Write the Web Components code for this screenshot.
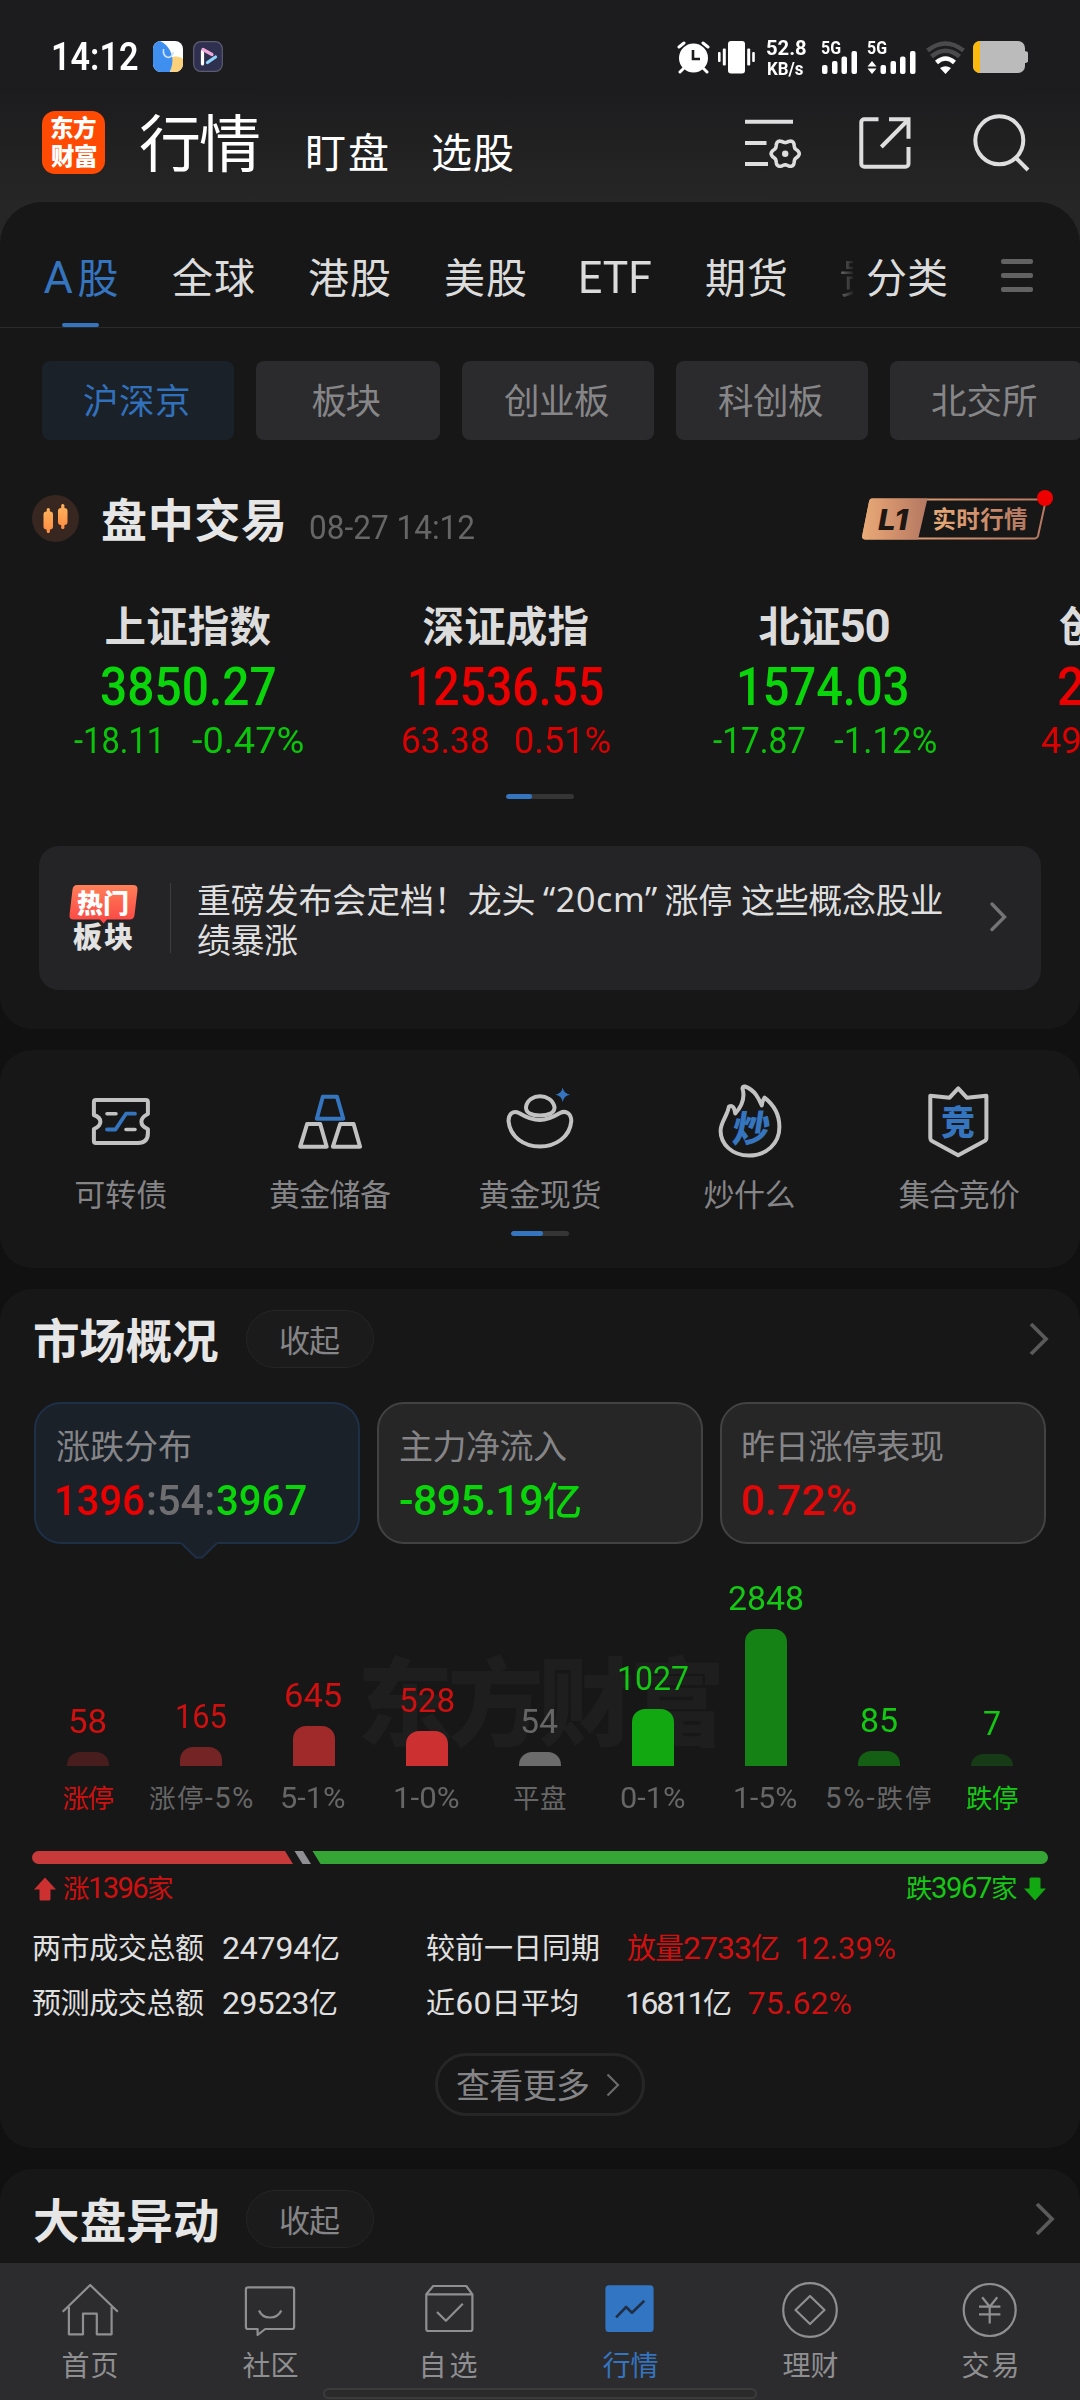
<!DOCTYPE html>
<html lang="zh-CN">
<head>
<meta charset="utf-8">
<title>行情</title>
<style>
    body {
        margin: 0;
        width: 1080px;
        height: 2400px;
        overflow: hidden;
        background: #111;
        font-family: "Noto Sans CJK SC", sans-serif;
    }
</style>
</head>
<body>
<market-app></market-app>

<script>
const CJK = '"Noto Sans CJK SC", sans-serif';
const LATIN = 'Roboto, "Noto Sans CJK SC", sans-serif';
const pen = document.createElement('canvas').getContext('2d');

// Base for all the parts: puts render() into an open shadow root.
class Part extends HTMLElement {
    constructor() {
        super();
        this.attachShadow({ mode: 'open' });
    }

    connectedCallback() {
        this.shadowRoot.innerHTML = this.render();
    }

    attr(name, fallback = '') {
        return this.getAttribute(name) ?? fallback;
    }
}

// One line of text, tracked (or condensed, if all latin) so that its ink is `w` wide.
class FitText extends Part {

    isLatin(s) {
        return /^[\x20-\x7e]+$/.test(s);
    }

    font(ch, size, weight) {
        const own = this.attr('font');
        if (own) return `${weight} ${size}px "${own}", ${CJK}`;
        return this.isLatin(ch) ? `${weight} ${size * 1.1}px ${LATIN}` : `${weight} ${size}px ${CJK}`;
    }

    render() {
        const text = this.textContent;
        const size = +this.attr('size', 30);
        const weight = this.attr('weight', '400');
        const own = this.attr('font');
        const runs = text.match(/[\x20-\x7e]+|[^\x20-\x7e]+/g) || [];
        const body = own ? text : runs.map(r => this.isLatin(r) ? `<i>${r}</i>` : r).join('');
        return `
            <style>
                :host {
                    display: block;
                    flex: none;
                    height: ${size}px;
                    font: ${weight} ${size}px/${size}px ${own ? `"${own}",` : ''} ${CJK};
                    white-space: pre;
                }
                span { display: inline-block; transform-origin: 0 50%; }
                i { font: ${weight} 1.1em/0 ${LATIN}; }
            </style>
            <span>${body}</span>
        `.replace(/\n\s*/g, ' ').replace('</style> ', '</style>').trim();
    }

    connectedCallback() {
        super.connectedCallback();
        const w = +this.attr('w');
        if (!w) return;
        const text = this.textContent;
        const size = +this.attr('size', 30);
        const weight = this.attr('weight', '400');
        const span = this.shadowRoot.querySelector('span');
        const first = text[0], last = text[text.length - 1];
        pen.font = this.font(first, size, weight);
        const left = -pen.measureText(first).actualBoundingBoxLeft;
        pen.font = this.font(last, size, weight);
        const m = pen.measureText(last);
        const right = m.width - m.actualBoundingBoxRight;
        const ink = span.getBoundingClientRect().width - left - right;
        this.style.width = w + 'px';
        if (this.isLatin(text)) {
            const k = w / ink;
            span.style.transform = `scaleX(${k})`;
            span.style.marginLeft = -left * k + 'px';
        } else {
            span.style.letterSpacing = (text.length > 1 ? (w - ink) / (text.length - 1) : 0) + 'px';
            span.style.marginLeft = -left + 'px';
        }
    }
}
customElements.define('fit-text', FitText);

class StatusBar extends Part {
    render() {
        return `
            <style>
                :host { display: flex; height: 92px; padding-left: 54px; color: #fff; align-items: flex-start; }
                .app { margin-top: 41px; }
                .a1 { margin-left: 15px; }
                .a2 { margin-left: 10px; }
                svg { display: block; flex: none; }
                .rate { margin: 38px 0 0 12px; display: flex; flex-direction: column; gap: 0; width: 42px; }
                .net { margin-top: 39px; height: 34px; display: flex; flex-direction: column; }
            </style>
            <fit-text size="35" w="84" weight="600" style="margin-top:37px">14:12</fit-text>
            <svg class="app a1" width="30" height="31" viewBox="0 0 30 31">
                <clipPath id="r"><rect width="30" height="31" rx="8"/></clipPath>
                <g clip-path="url(#r)">
                    <rect width="30" height="31" fill="#fff"/>
                    <path d="M18 17c5-3 9-1 12 1v13H18z" fill="#fbd17c"/>
                    <path d="M0 0h7c9 4 14 14 12 24l-2 7H0z" fill="#3f8ff0"/>
                    <path d="M10.500 8c-1 10 8 11 10 3" fill="none" stroke="#cfe3fb" stroke-width="1.600"/>
                </g>
            </svg>
            <svg class="app a2" width="30" height="31" viewBox="0 0 30 31" fill="none" stroke-width="3.200" stroke-linecap="round">
                <rect x=".7" y=".7" width="28.600" height="29.600" rx="7" fill="#2f2f50" stroke="#5d5d72" stroke-width="1.200"/>
                <path d="M9.500 10v13" stroke="#fff"/>
                <path d="M10 8.500l9 5" stroke="#f0a8d8"/>
                <path d="M14.500 21.500l8-5.500" stroke="#8fd4f8"/>
            </svg>
            <svg width="33" height="33" viewBox="0 0 33 33" style="margin:41px 0 0 454px">
                <g stroke="#fff" stroke-width="3" stroke-linecap="round" fill="none">
                    <path d="M2 6l5-4M31 6l-5-4M7 27l-4 4M26 27l4 4"/>
                </g>
                <circle cx="16.500" cy="17" r="14.500" fill="#fff"/>
                <path d="M16 9v9h7" fill="none" stroke="#1c1c1e" stroke-width="2.600"/>
            </svg>
            <svg width="37" height="33" viewBox="0 0 37 33" fill="#fff" style="margin:41px 0 0 8px">
                <rect x="10" width="17" height="32.500" rx="3"/>
                <rect x="0" y="11" width="2.600" height="10" rx="1"/><rect x="4.800" y="7.500" width="3" height="17" rx="1"/>
                <rect x="29.200" y="7.500" width="3" height="17" rx="1"/><rect x="34.200" y="11" width="2.600" height="10" rx="1"/>
            </svg>
            <div class="rate">
                <fit-text size="18.500" w="39" weight="700">52.8</fit-text>
                <fit-text size="17" w="35" weight="700" style="margin:2px 0 0 1px">KB/s</fit-text>
            </div>
            <div class="net" style="margin-left:12px">
                <fit-text size="16" w="20" weight="700">5G</fit-text>
                <svg width="37" height="23" viewBox="0 0 37 23" fill="#fff" style="margin-top:-4px">
                    <rect x="1" y="14" width="5.500" height="9" rx="2"/><rect x="11" y="10" width="5.500" height="13" rx="2"/>
                    <rect x="20.500" y="5.500" width="5.500" height="17.500" rx="2"/><rect x="30.500" y="0" width="5.500" height="23" rx="2"/>
                </svg>
            </div>
            <div class="net" style="margin-left:9px">
                <fit-text size="16" w="20" weight="700">5G</fit-text>
                <svg width="50" height="23" viewBox="0 0 50 23" fill="#fff" style="margin-top:-4px">
                    <path d="M5 10l4.500 5.500H.5zM5 23l4.500-5.500H.5z"/>
                    <rect x="13.500" y="14" width="5.500" height="9" rx="2"/><rect x="23.500" y="10" width="5.500" height="13" rx="2"/>
                    <rect x="33" y="5.500" width="5.500" height="17.500" rx="2"/><rect x="43" y="0" width="5.500" height="23" rx="2"/>
                </svg>
            </div>
            <svg width="39" height="33" viewBox="0 0 39 33" fill="none" stroke-width="4.500" style="margin:41px 0 0 9px">
                <path d="M1.500 9.500Q19.500-4.500 37.500 9.500" stroke="#4a4a4c"/>
                <path d="M5.500 15.500Q19.500 4 33.500 15.500" stroke="#4a4a4c"/>
                <path d="M10.500 21.500Q19.500 13.500 28.500 21.500" stroke="#fff"/>
                <path d="M14 27q5.500-3.500 11 0l-5.500 6z" fill="#fff"/>
            </svg>
            <svg width="55" height="33" viewBox="0 0 55 33" style="margin:41px 0 0 8px">
                <clipPath id="b"><rect width="52" height="32" rx="7"/></clipPath>
                <g clip-path="url(#b)"><rect width="52" height="32" fill="#bbb"/><rect width="7" height="32" fill="#fbb80f"/></g>
                <path d="M51 10q4 0 4 2v8q0 2-4 2z" fill="#bbb"/>
            </svg>
        `;
    }
}
customElements.define('status-bar', StatusBar);

class AppHeader extends Part {

    gear(cx, cy) {
        let d = '';
        for (let a = 0; a < 360; a += 5) {
            const t = a * Math.PI / 180;
            const r = 12.6 + 1.5 * Math.cos(6 * t);
            d += (a ? 'L' : 'M') + (cx + r * Math.cos(t)).toFixed(1) + ' ' + (cy + r * Math.sin(t)).toFixed(1);
        }
        return d + 'z';
    }

    render() {
        return `
            <style>
                :host { display: flex; height: 110px; padding-left: 42px; align-items: flex-start; color: #fff; }
                .logo {
                    width: 63px; height: 63px; margin-top: 19px; border-radius: 13px; background: #ff4a04;
                    display: flex; flex-direction: column; align-items: center; padding-top: 5px;
                    box-sizing: border-box; gap: 4px;
                }
                svg { fill: none; stroke: #dedede; stroke-width: 4; flex: none; }
            </style>
            <div class="logo">
                <fit-text size="23.500" w="45" weight="900">东方</fit-text>
                <fit-text size="23.500" w="45" weight="900">财富</fit-text>
            </div>
            <fit-text size="62" w="119" style="margin:17px 0 0 35px">行情</fit-text>
            <fit-text size="41" w="80" style="margin:38px 0 0 49px">盯盘</fit-text>
            <fit-text size="41" w="81" style="margin:38px 0 0 44px">选股</fit-text>
            <svg width="56" height="52" viewBox="0 0 56 52" style="margin:26px 0 0 232px">
                <path d="M0 3.700h48M0 25h21.500M0 46h23"/>
                <path d="${this.gear(40.2, 35.7)}" stroke-width="3.600" stroke-linejoin="round"/>
                <circle cx="40.200" cy="35.700" r="3.200" fill="#dedede" stroke="none"/>
            </svg>
            <svg width="54" height="54" viewBox="0 0 54 54" style="margin:24px 0 0 58px">
                <path d="M19.500 3.300H5.300a3 3 0 0 0-3 3v41.400a3 3 0 0 0 3 3h41.200a3 3 0 0 0 3-3V31M30 3.300h19.500v19.400M49 4L22.300 31"/>
            </svg>
            <svg width="58" height="58" viewBox="0 0 58 58" style="margin:22px 0 0 60px">
                <circle cx="26.300" cy="26.300" r="24"/>
                <path d="M43 44l12 12"/>
            </svg>
        `;
    }
}
customElements.define('app-header', AppHeader);

class MarketTabs extends Part {
    render() {
        return `
            <style>
                :host {
                    display: flex; gap: 55px; height: 126px; box-sizing: border-box;
                    padding: 53px 0 0 43px; border-bottom: 1px solid #2a2a2b; color: #dcdcdc;
                }
                .on { color: #3574be; display: flex; flex-direction: column; align-items: center; width: 75px; }
                .on b { width: 37px; height: 5px; border-radius: 3px; background: #3574be; margin-top: 27px; }
                .more { width: 12px; overflow: hidden; -webkit-mask: linear-gradient(90deg, #0006, #0001); color: #dcdcdc; }
                .rows { display: flex; flex-direction: column; gap: 9.500px; margin: 4px 0 0 -1px; }
                .rows i { width: 32px; height: 4.500px; border-radius: 2px; background: #626262; }
            </style>
            <div class="on"><fit-text size="41" w="74">A 股</fit-text><b></b></div>
            <fit-text size="41" w="81">全球</fit-text>
            <fit-text size="41" w="81">港股</fit-text>
            <fit-text size="41" w="81">美股</fit-text>
            <fit-text size="41" w="70">ETF</fit-text>
            <fit-text size="41" w="80">期货</fit-text>
            <div class="more"><fit-text size="41" w="39">贵</fit-text></div>
            <fit-text size="41" w="80" style="margin-left:-41px">分类</fit-text>
            <div class="rows"><i></i><i></i><i></i></div>
        `;
    }
}
customElements.define('market-tabs', MarketTabs);

class FilterChip extends Part {
    render() {
        return `
            <style>
                :host {
                    display: flex; flex: none; width: ${this.attr('width', '192')}px; height: 79px; border-radius: 8px;
                    background: #2b2b2d; color: #868688; justify-content: center; padding: 20px 3px 0 0; box-sizing: border-box;
                }
                :host([active]) { background: #1a2129; color: #3170bb; }
            </style>
            <fit-text size="35.500" w="${this.attr('w', '105')}">${this.textContent}</fit-text>
        `;
    }
}
customElements.define('filter-chip', FilterChip);

class SessionHead extends Part {
    render() {
        return `
            <style>
                :host { display: flex; height: 106px; padding-left: 32px; align-items: flex-start; }
                svg { flex: none; }
            </style>
            <svg width="47" height="47" viewBox="0 0 47 47" style="margin-top:15px">
                <defs><linearGradient id="c" x2="0" y2="1"><stop stop-color="#ffb15c"/><stop offset="1" stop-color="#ff8f45"/></linearGradient></defs>
                <circle cx="23.500" cy="23.500" r="23.500" fill="#382720"/>
                <g fill="url(#c)">
                    <rect x="11.500" y="16.500" width="9.500" height="18" rx="3"/><rect x="14.700" y="13" width="3.200" height="25" rx="1.500"/>
                    <rect x="26" y="13" width="9.500" height="17" rx="3"/><rect x="29.200" y="9" width="3.200" height="25" rx="1.500"/>
                </g>
            </svg>
            <fit-text size="46" w="182" weight="700" style="margin:14px 0 0 23px;color:#e6e6e6">盘中交易</fit-text>
            <fit-text size="31" w="164" style="margin:30px 0 0 26px;color:#666">08-27 14:12</fit-text>
            <svg width="196" height="56" viewBox="0 0 196 56" style="margin:8px 0 0 385px">
                <defs><linearGradient id="g" x1="0" x2="1"><stop stop-color="#e8ab77"/><stop offset=".35" stop-color="#d9976f"/><stop offset="1" stop-color="#b47862"/></linearGradient></defs>
                <path d="M13 11.500H187L179 48Q178 50.500 175.500 50.500H7Q3.500 50.500 4.300 47L11 14Q11.500 11.500 13 11.500z" fill="none" stroke="url(#g)" stroke-width="2"/>
                <path d="M13 10.500H68.500L59 51.500H6Q2.500 51.500 3.300 47.500L10 13.500Q10.700 10.500 13 10.500z" fill="url(#g)"/>
                <text x="19" y="42" font-family="Inter" font-weight="800" font-style="italic" font-size="28" textLength="30" lengthAdjust="spacingAndGlyphs" fill="#1c1712">L1</text>
                <text x="73.500" y="40" font-family="Noto Sans CJK SC" font-weight="700" font-size="23.500" textLength="95" fill="url(#g)">实时行情</text>
                <circle cx="186" cy="10" r="8" fill="#ee0000"/>
            </svg>
        `;
    }
}
customElements.define('session-head', SessionHead);

class IndexQuote extends Part {
    render() {
        const [name, value, diff, pct] = this.textContent.split('|');
        const [wn, wv, wd, wp] = this.attr('w').split(' ');
        return `
            <style>
                :host { display: flex; flex: none; width: 318px; flex-direction: column; align-items: center; color: #0ad40a; }
                :host([up]) { color: #ea0000; }
                :host([cut]) { align-items: flex-start; padding-left: 76px; }
                div { display: flex; margin-top: 14px; gap: ${this.attr('gap', '33')}px; opacity: .92; }
                :host([cut]) div { margin-left: -18px; }
            </style>
            <fit-text size="41.500" w="${wn}" weight="700" style="color:#dcdcdc">${name}</fit-text>
            <fit-text size="48" w="${wv}" weight="500" style="margin-top:14px">${value}</fit-text>
            <div><fit-text size="34" w="${wd}">${diff}</fit-text>${pct ? `<fit-text size="34" w="${wp}">${pct}</fit-text>` : ''}</div>
        `;
    }
}
customElements.define('index-quote', IndexQuote);

class PagerBar extends Part {
    render() {
        return `
            <style>
                :host { display: block; width: ${this.attr('width')}px; height: 5px; border-radius: 3px; background: #353536; overflow: hidden; }
                i { display: block; width: ${this.attr('fill')}px; height: 5px; border-radius: 3px; background: #3574be; }
            </style>
            <i></i>
        `;
    }
}
customElements.define('pager-bar', PagerBar);

class HotBanner extends Part {
    render() {
        return `
            <style>
                :host {
                    display: flex; width: 1002px; height: 144px; box-sizing: border-box; border-radius: 20px;
                    background: #242426; padding-left: 30px; color: #dfdfdf; align-items: flex-start;
                }
                hr { width: 1px; height: 70px; margin: 37px 0 0 31px; border: 0; background: #3c3c3e; }
                .text { margin: 36px 0 0 27px; width: 745px; }
                .line { display: flex; height: 40px; gap: 8.500px; }
                svg { flex: none; }
            </style>
            <svg width="70" height="74" viewBox="0 0 70 74" style="margin-top:37px">
                <defs><linearGradient id="h" x2="0" y2="1"><stop stop-color="#ff8058"/><stop offset="1" stop-color="#fb4444"/></linearGradient></defs>
                <path d="M8 2H64Q69 2 68.500 7L65.500 32Q65 36.500 60.500 36.500H38L34.500 40.500 31 36.500H4.500Q0 36.500.5 32L3.500 6.500Q4 2 8 2z" fill="url(#h)"/>
                <text x="8" y="30" font-family="Noto Sans CJK SC" font-weight="900" font-size="26" textLength="52" fill="#fff">热门</text>
                <text x="4" y="65" font-family="Noto Sans CJK SC" font-weight="900" font-size="29" textLength="60" fill="#e2e2e2">板块</text>
            </svg>
            <hr>
            <div class="text">
                <div class="line">
                    <fit-text size="34" w="336.500">重磅发布会定档！龙头</fit-text>
                    <fit-text size="34" w="114" font="Noto Sans">“20cm”</fit-text>
                    <fit-text size="34" w="277">涨停 这些概念股业</fit-text>
                </div>
                <div class="line"><fit-text size="34" w="99">绩暴涨</fit-text></div>
            </div>
            <svg width="18" height="32" viewBox="0 0 18 32" fill="none" stroke="#747476" stroke-width="3.400" stroke-linecap="round" style="margin:55px 0 0 46px">
                <path d="M3 3L15.500 16 3 28.500"/>
            </svg>
        `;
    }
}
customElements.define('hot-banner', HotBanner);

const ENTRY_ICONS = {
    bond: `<path d="M12.900 16H62.900Q64.900 16 64.900 18V30Q58.400 33 58.400 37.700T64.900 45V49Q64.900 59 55 59H12.900Q10.900 59 10.900 57V45Q17.400 42 17.400 37.700T10.900 31V18Q10.900 16 12.900 16z"/>
        <path d="M24 29.700H33M43 45.500H52" stroke-width="3.600"/>
        <path class="b" d="M24 45.500H32.500L43 29.700H52" stroke-width="3.800"/>`,
    gold: `<path class="b" d="M30.800 12.700H45L51.300 34.700H24.800z"/>
        <path d="M15.100 40H28.200L34.700 62.700H8.200zM48.200 40H61.600L68.100 62.700H40.900z"/>`,
    ingot: `<path d="M37.800 36C28 36 22 32 17 29C11 26 6.500 30 6.500 37C8 53 22 62.500 37.800 62.500S68 53 69.300 37C69.300 29.500 64 26 58 29C53 32 47 36 37.800 36z"/>
        <path d="M24 23C25 15.500 32 12.300 38 12.300S51 15.500 52.500 23C53 29 46 31.500 38 31.500S23.500 29 24 23z"/>
        <path d="M60.700 3.500Q61.700 9.700 68 10.700Q61.700 11.700 60.700 18Q59.700 11.700 53.400 10.700Q59.700 9.700 60.700 3.500z" fill="#3574be" stroke="none"/>`,
    fire: `<path d="M33 2.500C43 6 47 15 49.800 21.500Q50 17 52.500 13.700C62 21 67.400 31 67.400 43C67.400 60 54 71.500 37 71.500C20 71.500 8.600 60 8.600 47C8.600 38 15 33 17 22.500Q22 20 23.300 29.500C30 22 33 13 30.500 4.500Q30.500 2 33 2.500z"/>
        <text x="19" y="58" transform="translate(9 0) skewX(-9)" textLength="37" font-size="37">炒</text>`,
    shield: `<path d="M37.200 4.300L45.800 13.700 65.400 11.700V54Q65.400 56 63.500 57L37.200 71.300 11 57Q9.300 56 9.300 54V11.700L28.600 13.700z"/>
        <text x="20" y="51" font-size="34" textLength="34">竞</text>`
};

class QuickEntry extends Part {
    render() {
        return `
            <style>
                :host { display: flex; flex: 1; flex-direction: column; align-items: center; color: #858588; }
                svg { fill: none; stroke: #c2c2c2; stroke-width: 4; stroke-linejoin: round; stroke-linecap: round; }
                .b { stroke: #3574be; }
                text { fill: #3574be; stroke: none; font-family: "Noto Sans CJK SC"; font-weight: 900; }
            </style>
            <svg width="76" height="76" viewBox="0 0 76 76">${ENTRY_ICONS[this.attr('icon')]}</svg>
            <fit-text size="31" w="${this.attr('w')}" style="margin-top:17px">${this.textContent}</fit-text>
        `;
    }
}
customElements.define('quick-entry', QuickEntry);

class SectionTitle extends Part {
    render() {
        return `
            <style>
                :host { display: flex; align-items: flex-start; padding: 21px ${this.attr('end')}px 0 34px; height: 92px; box-sizing: content-box; }
                .pill {
                    width: 128px; height: 58px; box-sizing: border-box; margin-left: 28px; border: 1px solid #262627;
                    border-radius: 29px; background: #1b1b1b; display: flex; justify-content: center; padding-top: 12px; color: #858588;
                }
                svg { margin: 12px 0 0 auto; }
            </style>
            <fit-text size="46.500" w="184" weight="700" style="margin-top:5px;color:#e6e6e6">${this.textContent}</fit-text>
            <div class="pill"><fit-text size="31" w="60">收起</fit-text></div>
            <svg width="20" height="34" viewBox="0 0 20 34" fill="none" stroke="#5a5a5b" stroke-width="3.800"><path d="M2 2L17 17 2 32"/></svg>
        `;
    }
}
customElements.define('section-title', SectionTitle);

class StatCard extends Part {
    render() {
        return `
            <style>
                :host {
                    display: block; flex: 1; height: 142px; box-sizing: border-box; position: relative;
                    border: 2px solid #424243; border-radius: 27px; background: #262626; padding: 24px 0 0 21px; color: #858588;
                }
                :host([active]) { background: #1a2129; border-color: #1e3047; }
                .value { display: flex; margin-top: 17px; gap: 4px; }
                /* pointer under the active card */
                svg { display: none; position: absolute; left: 144px; top: 138px; }
                :host([active]) svg { display: block; }
            </style>
            <fit-text size="34" w="${this.attr('w')}">${this.attr('label')}</fit-text>
            <div class="value"><slot></slot></div>
            <svg width="38" height="18" viewBox="0 0 38 18"><path d="M0 0H38L37 1 22 15.500Q19 17.500 16 15.500L1 1z" fill="#1a2129"/><path d="M1 1L16 15.500H22L37 1" fill="none" stroke="#1e3047" stroke-width="1.800"/></svg>
        `;
    }
}
customElements.define('stat-card', StatCard);

class DistBar extends Part {
    render() {
        return `
            <style>
                :host { display: flex; flex: none; width: 113px; flex-direction: column; align-items: center; justify-content: flex-end; color: #cf1010; }
                :host([down]) { color: #14c814; }
                :host([flat]) { color: #666; }
                i { width: 42px; height: ${this.attr('h')}px; border-radius: 13px 13px 0 0; background: ${this.attr('fill')}; margin: 17px 0 18px; }
                :host(:not([edge])) .label { color: #666; }
            </style>
            <fit-text size="31" w="${this.attr('wv')}">${this.attr('value')}</fit-text>
            <i></i>
            <fit-text class="label" size="26.500" w="${this.attr('w')}">${this.textContent}</fit-text>
        `;
    }
}
customElements.define('dist-bar', DistBar);

class RatioBar extends Part {
    render() {
        return `
            <style>
                :host { display: block; padding: 0 32px; }
                svg { display: block; }
                .legend { display: flex; justify-content: space-between; margin-top: 10px; height: 30px; }
                .legend div { display: flex; gap: 7px; }
                .legend svg { margin-top: 3px; }
            </style>
            <svg width="1016" height="13" viewBox="0 0 1016 13">
                <path d="M6.500 0H253L261 13H6.500A6.500 6.500 0 0 1 6.500 0z" fill="#c83939"/>
                <path d="M262.500 0H271L279 13H270.500z" fill="#909094"/>
                <path d="M280.500 0H1009.500A6.500 6.500 0 0 1 1009.500 13H288.500z" fill="#35a635"/>
            </svg>
            <div class="legend">
                <div style="margin-left:2px;color:#cf1010">
                    <svg width="22" height="24" viewBox="0 0 22 24" fill="#cc3030"><path d="M11 .5L22 12.500H16.500V22Q16.500 23.500 15 23.500H7Q5.500 23.500 5.500 22V12.500H0z"/></svg>
                    <fit-text size="26.500" w="110">涨1396家</fit-text>
                </div>
                <div style="margin-right:2px;color:#14c814">
                    <fit-text size="26.500" w="111">跌3967家</fit-text>
                    <svg width="22" height="24" viewBox="0 0 22 24" fill="#12a812"><path d="M11 23.500L22 11.500H16.500V2Q16.500 .5 15 .5H7Q5.500 .5 5.500 2V11.500H0z"/></svg>
                </div>
            </div>
        `;
    }
}
customElements.define('ratio-bar', RatioBar);

class TurnoverRow extends Part {
    render() {
        return `
            <style>
                :host { display: grid; grid-template-columns: 190px 204px 200px auto; padding-left: 33px; height: 55px; color: #e0e0e0; }
            </style>
            <slot></slot>
        `;
    }
}
customElements.define('turnover-row', TurnoverRow);

class MorePill extends Part {
    render() {
        return `
            <style>
                :host {
                    display: flex; width: 210px; height: 63px; box-sizing: border-box; border: 3px solid #262627; border-radius: 32px;
                    padding: 11px 0 0 19px; color: #858588;
                }
                svg { margin: 6px 0 0 17px; }
            </style>
            <fit-text size="34" w="132">查看更多</fit-text>
            <svg width="14" height="24" viewBox="0 0 14 24" fill="none" stroke="#6a6a6b" stroke-width="2.200"><path d="M1.500 1.500L12 12 1.500 22.500"/></svg>
        `;
    }
}
customElements.define('more-pill', MorePill);

const TAB_ICONS = {
    home: `<path d="M2.700 31.700L30.200 5 57.800 31.700M8.900 27V54.300H23V33.700H36.800V54.300H51.600V27"/>`,
    chat: `<path d="M8 7.300H52Q54.100 7.300 54.100 9.500V47Q54.100 49 52 49H25.200L17.600 55V49H8Q5.900 49 5.900 47V9.500Q5.900 7.300 8 7.300z"/><path d="M19 30.500Q22 37.500 30 37.500T41.300 30.500"/>`,
    pick: `<path d="M6.300 14.300L13.200 6H46.300L52.400 14.300V49Q52.400 51 50.400 51H8.300Q6.300 51 6.300 49zH52.400"/><path d="M17 32L25.900 40.700 42.800 23.700"/>`,
    quote: `<rect x="5.400" y="5.300" width="48.200" height="46.700" rx="3.500" fill="#3275c3" stroke="none"/><path d="M16.100 37.300L26.100 27 32 32.700 44.300 20.700" stroke="#1f2f45" stroke-width="2.600"/>`,
    wealth: `<circle cx="30" cy="30" r="26.800"/><path d="M30 16L44.500 30 30 44 15.500 30z"/>`,
    trade: `<circle cx="29.700" cy="30" r="26"/><path d="M22.200 17.300L29.700 26.700 37.300 17.300M19 26.700H40.400M19 34.300H40.400M29.700 26.700V43.500"/>`
};

class TabItem extends Part {
    render() {
        return `
            <style>
                :host { display: flex; flex: 1; flex-direction: column; align-items: center; padding-top: 17px; color: #8f8f91; }
                :host([active]) { color: #3574be; }
                svg { fill: none; stroke: #8f8f91; stroke-width: 2.200; stroke-linejoin: round; }
            </style>
            <svg width="60" height="60" viewBox="0 0 60 60">${TAB_ICONS[this.attr('icon')]}</svg>
            <fit-text size="28" w="55" style="margin-top:10px">${this.textContent}</fit-text>
        `;
    }
}
customElements.define('tab-item', TabItem);

class SheetCard extends Part {
    render() {
        return `
            <style>
                :host { display: block; flex: none; background: #171717; border-radius: 32px; overflow: hidden; box-sizing: border-box; }
            </style>
            <slot></slot>
        `;
    }
}
customElements.define('sheet-card', SheetCard);

class MarketApp extends Part {
    render() {
        return `
            <style>
                :host {
                    display: flex; flex-direction: column; width: 1080px; height: 2400px; overflow: hidden; position: relative;
                    background: linear-gradient(#1c1c1e 0, #1c1c1e 90px, #262626 202px, #262626 260px, #111 260px);
                }
                .sheets { display: flex; flex-direction: column; gap: 21px; height: 2061px; overflow: hidden; }
                .chips { display: flex; gap: 22px; padding: 33px 0 40px 42px; }
                .quotes { display: flex; padding: 18px 0 0 29px; height: 192px; box-sizing: border-box; }
                .entries { display: flex; padding: 34px 16px 0; }
                .cards { display: flex; gap: 17px; padding: 0 34px; }
                .chart { display: flex; justify-content: center; align-items: stretch; height: 237px; margin-top: 29px; position: relative; }
                /* watermark behind the bars */
                .mark { position: absolute; left: 361px; top: 76px; color: #1e1e1e; }
                .chart > dist-bar { position: relative; }
                .d { display: flex; gap: 18px; }
                .r { color: #cf1010; }
                nav { display: flex; flex: 1; background: #2c2c2e; position: relative; }
                .gesture {
                    position: absolute; left: 323px; top: 125px; width: 434px; height: 11px; box-sizing: border-box;
                    border: 2px solid #3b3b3c; border-radius: 6px; background: #2a2a2b;
                }
            </style>
            <status-bar></status-bar>
            <app-header></app-header>
            <div class="sheets">
                <sheet-card style="height:827px;border-radius:42px 42px 32px 32px">
                    <market-tabs></market-tabs>
                    <div class="chips">
                        <filter-chip active>沪深京</filter-chip>
                        <filter-chip width="184" w="68">板块</filter-chip>
                        <filter-chip>创业板</filter-chip>
                        <filter-chip>科创板</filter-chip>
                        <filter-chip>北交所</filter-chip>
                    </div>
                    <session-head></session-head>
                    <div class="quotes">
                        <index-quote w="165 173 85 111">上证指数|3850.27|-18.11|-0.47%</index-quote>
                        <index-quote up w="165 192 85 94" gap="28">深证成指|12536.55|63.38|0.51%</index-quote>
                        <index-quote w="131 168 92 102" gap="29">北证50|1574.03|-17.87|-1.12%</index-quote>
                        <index-quote up cut w="39 24 39">创|2|49</index-quote>
                    </div>
                    <pager-bar width="68" fill="26" style="margin:16px 0 47px 506px"></pager-bar>
                    <hot-banner style="margin-left:39px"></hot-banner>
                </sheet-card>
                <sheet-card style="height:218px">
                    <div class="entries">
                        <quick-entry icon="bond" w="91">可转债</quick-entry>
                        <quick-entry icon="gold" w="121">黄金储备</quick-entry>
                        <quick-entry icon="ingot" w="121">黄金现货</quick-entry>
                        <quick-entry icon="fire" w="90">炒什么</quick-entry>
                        <quick-entry icon="shield" w="121">集合竞价</quick-entry>
                    </div>
                    <pager-bar width="58" fill="32" style="margin:23px auto 0"></pager-bar>
                </sheet-card>
                <sheet-card style="height:859px">
                    <section-title end="31">市场概况</section-title>
                    <div class="cards">
                        <stat-card active label="涨跌分布" w="133">
                            <fit-text size="39" w="87" weight="500" style="color:#ea0000">1396</fit-text>
                            <fit-text size="39" w="65" weight="500" style="color:#6e6e70">:54:</fit-text>
                            <fit-text size="39" w="89" weight="500" style="color:#0ad40a">3967</fit-text>
                        </stat-card>
                        <stat-card label="主力净流入" w="166">
                            <fit-text size="39" w="180" weight="500" style="color:#0ad40a">-895.19亿</fit-text>
                        </stat-card>
                        <stat-card label="昨日涨停表现" w="200">
                            <fit-text size="39" w="113" weight="500" style="color:#e00808">0.72%</fit-text>
                        </stat-card>
                    </div>
                    <div class="chart">
                        <fit-text class="mark" size="96" w="358" weight="900">东方财富</fit-text>
                        <dist-bar edge value="58" wv="36" h="14" fill="#471d1e" w="51">涨停</dist-bar>
                        <dist-bar value="165" wv="49" h="19" fill="#752426" w="104">涨停-5%</dist-bar>
                        <dist-bar value="645" wv="55" h="40" fill="#a02a2a" w="63">5-1%</dist-bar>
                        <dist-bar value="528" wv="53" h="35" fill="#cc3030" w="64">1-0%</dist-bar>
                        <dist-bar flat value="54" wv="36" h="14" fill="#6c6c6c" w="52">平盘</dist-bar>
                        <dist-bar down value="1027" wv="69" h="57" fill="#12a812" w="64">0-1%</dist-bar>
                        <dist-bar down value="2848" wv="74" h="137" fill="#148214" w="62">1-5%</dist-bar>
                        <dist-bar down value="85" wv="36" h="15" fill="#155f15" w="104">5%-跌停</dist-bar>
                        <dist-bar edge down value="7" wv="16" h="12" fill="#173a17" w="52">跌停</dist-bar>
                    </div>
                    <ratio-bar style="margin-top:41px"></ratio-bar>
                    <turnover-row style="margin-top:28px">
                        <fit-text size="29" w="171">两市成交总额</fit-text>
                        <fit-text size="29" w="116">24794亿</fit-text>
                        <fit-text size="29" w="171">较前一日同期</fit-text>
                        <div class="d r"><fit-text size="29" w="152">放量2733亿</fit-text><fit-text size="29" w="98">12.39%</fit-text></div>
                    </turnover-row>
                    <turnover-row>
                        <fit-text size="29" w="171">预测成交总额</fit-text>
                        <fit-text size="29" w="114">29523亿</fit-text>
                        <fit-text size="29" w="150">近60日平均</fit-text>
                        <div class="d"><fit-text size="29" w="104">16811亿</fit-text><fit-text class="r" size="29" w="102">75.62%</fit-text></div>
                    </turnover-row>
                    <more-pill style="margin:11px auto 0"></more-pill>
                </sheet-card>
                <sheet-card style="height:200px">
                    <section-title end="25">大盘异动</section-title>
                </sheet-card>
            </div>
            <nav>
                <tab-item icon="home">首页</tab-item>
                <tab-item icon="chat">社区</tab-item>
                <tab-item icon="pick">自选</tab-item>
                <tab-item icon="quote" active>行情</tab-item>
                <tab-item icon="wealth">理财</tab-item>
                <tab-item icon="trade">交易</tab-item>
                <div class="gesture"></div>
            </nav>
        `;
    }
}
customElements.define('market-app', MarketApp);
</script>
</body>
</html>
